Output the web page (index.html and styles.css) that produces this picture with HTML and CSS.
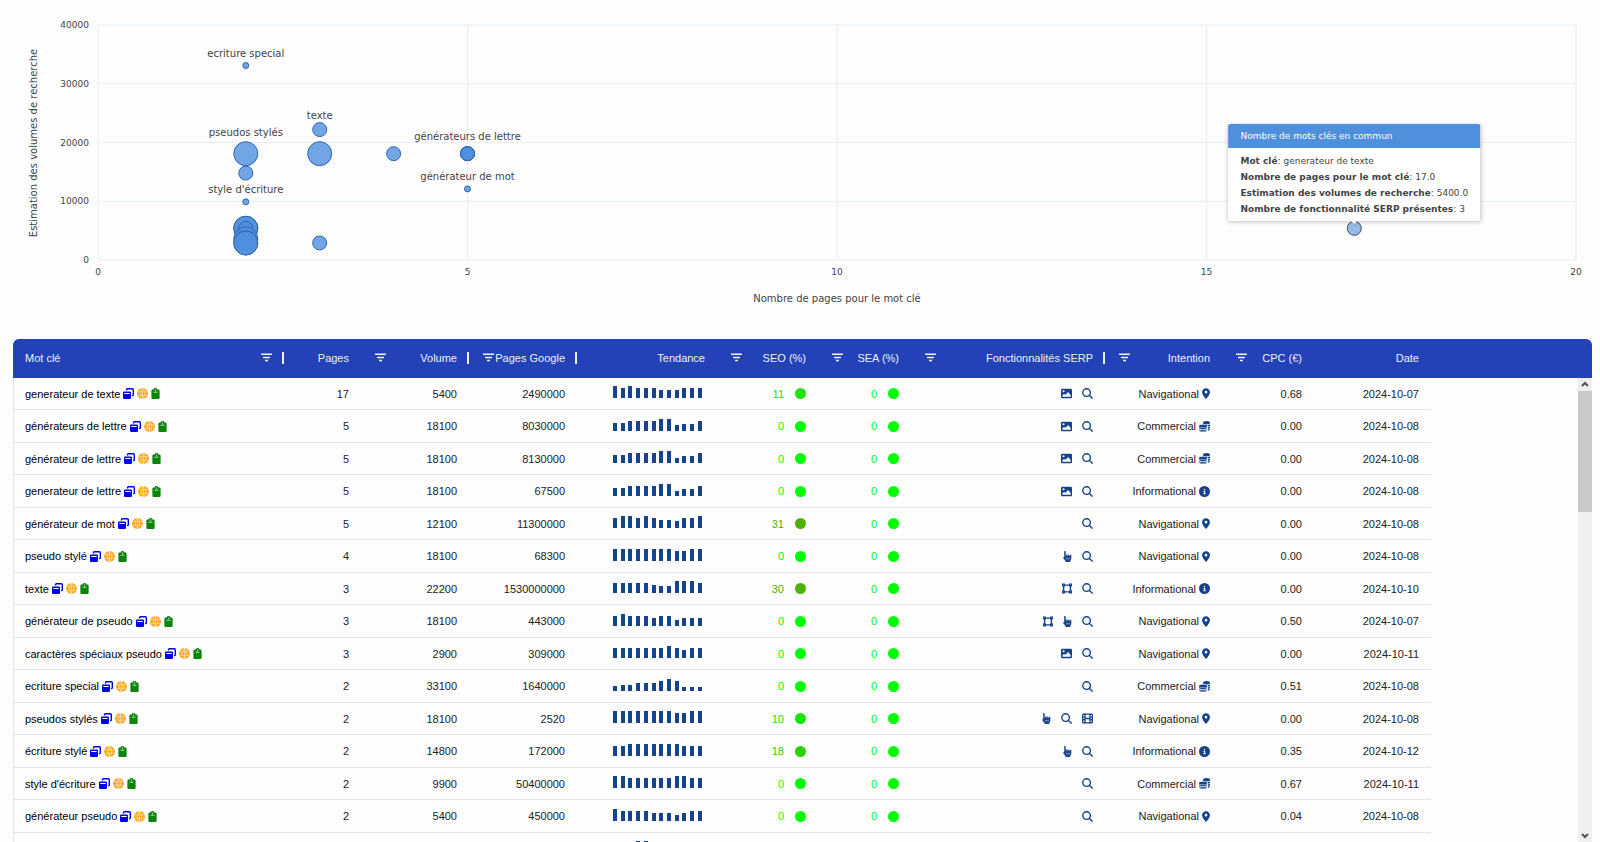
FILE: index.html
```html
<!DOCTYPE html>
<html lang="fr">
<head>
<meta charset="utf-8">
<title>Mots clés en commun</title>
<link rel="stylesheet" href="styles.css">
</head>
<body>
<svg class="sprite" aria-hidden="true">
  <symbol id="filter" viewBox="0 0 11 9"><path d="M0 1.200h11M2 4.400h7M4 7.600h3" stroke="currentColor" stroke-width="1.500" fill="none"/></symbol>
  <symbol id="windows" viewBox="0 0 11 11"><path d="M3.500 2.600V1.700q0-.9.900-.9h5q.9 0 .9.900v5q0 .9-.9.900H9" fill="none" stroke="currentColor" stroke-width="1.400"/><path fill-rule="evenodd" d="M1.200 3.400h5.600q1.200 0 1.200 1.200v5.200q0 1.200-1.200 1.200H1.200Q0 11 0 9.800V4.600q0-1.200 1.200-1.200zM1.300 5v1.100h5.400V5z"/></symbol>
  <symbol id="globe" viewBox="0 0 512 512"><circle cx="256" cy="256" r="252"/><path d="M256 0v512M20 176h472M20 336h472M256 6c-140 130-140 370 0 500M256 6c140 130 140 370 0 500" fill="none" stroke="#fff" stroke-width="22"/></symbol>
  <symbol id="clipboard" viewBox="0 0 384 512"><path fill-rule="evenodd" d="M192 0c-41.800 0-77.400 26.700-90.500 64H64C28.700 64 0 92.700 0 128v320c0 35.300 28.700 64 64 64h256c35.300 0 64-28.700 64-64V128c0-35.300-28.700-64-64-64h-37.500C269.400 26.700 233.800 0 192 0zm0 64a30 30 0 1 1 0 60 30 30 0 1 1 0-60zM104 180h176v30H104z"/></symbol>
  <symbol id="image" viewBox="0 0 512 448"><path fill-rule="evenodd" d="M64 0C29 0 0 29 0 64v320c0 35 29 64 64 64h384c35 0 64-29 64-64V64c0-35-29-64-64-64zM120 70a50 50 0 1 1 0 100 50 50 0 1 1 0-100zM64 376v-56l80-80 56 56 128-144 120 136v88z"/></symbol>
  <symbol id="search" viewBox="0 0 11 11"><path d="M8.400 4.600a3.800 3.800 0 1 1-7.600 0a3.800 3.800 0 0 1 7.600 0zM7.300 7.300l3.300 3.300" fill="none" stroke="currentColor" stroke-width="1.400"/></symbol>
  <symbol id="hand" viewBox="0 0 9 11"><path d="M1.200.7a.7.7 0 0 1 1.500 0v4h.6V3.800a.65.65 0 0 1 1.300 0v.9h.6V4.100a.65.65 0 0 1 1.300 0v.8h.5V4.500a.65.65 0 0 1 1.300 0v3.100c0 1.200-.5 1.700-1 2.200V11H2.500V9.900L.3 7.300c-.6-.8.2-1.500.9-1z"/><path d="M3.700 6.900v1.500M5 6.900v1.500M6.300 6.900v1.500" fill="none" stroke="#fff" stroke-width=".5"/></symbol>
  <symbol id="vector" viewBox="0 0 10 10"><path d="M1.600 1.600h6.800v6.800H1.600z" fill="none" stroke="currentColor" stroke-width="1.400"/><path d="M0 0h3v3H0zM7 0h3v3H7zM0 7h3v3H0zM7 7h3v3H7z"/><path d="M1.200 1.200h.6v.6h-.6zM8.200 1.200h.6v.6h-.6zM1.200 8.200h.6v.6h-.6zM8.200 8.200h.6v.6h-.6z" fill="#fff"/></symbol>
  <symbol id="film" viewBox="0 0 11 10"><rect width="11" height="10" rx="1.500"/><path d="M3.700 1.300h3.600v3H3.700zM3.700 5.700h3.600v3H3.700zM1.200 1.600h1.200v1.300H1.200zM1.200 4.300h1.200v1.300H1.200zM1.200 7.100h1.200v1.300H1.200zM8.600 1.600h1.200v1.300H8.600zM8.600 4.300h1.200v1.300H8.600zM8.600 7.100h1.200v1.300H8.600z" fill="#fff"/></symbol>
  <symbol id="pin" viewBox="0 0 384 512"><path fill-rule="evenodd" d="M215.700 499.200C267 435 384 279.400 384 192C384 86 298 0 192 0S0 86 0 192c0 87.400 117 243 168.300 307.200c12.300 15.300 35.100 15.300 47.400 0zM192 128a64 64 0 1 1 0 128 64 64 0 1 1 0-128z"/></symbol>
  <symbol id="coins" viewBox="0 0 11 11"><ellipse cx="7.500" cy="1.700" rx="3.500" ry="1.700"/><path d="M8.600 4.200c1-.2 1.900-.5 2.400-1v1.200c0 .5-.8 1-2.200 1.300zM8.900 6.400c.9-.2 1.600-.5 2.100-.9v1.200c0 .5-.8 1-2.100 1.300zM8.900 8.600c.9-.2 1.600-.5 2.100-.9v.9c0 .5-.8 1-2.100 1.300z"/><ellipse cx="4" cy="4.900" rx="4" ry="1.500"/><path d="M0 6c1.500 1.200 6.500 1.200 8 0v.8c0 1.700-8 1.700-8 0zM0 7.900c1.500 1.200 6.500 1.200 8 0v.7c0 1.700-8 1.700-8 0zM0 9.600c1.500 1.100 6.500 1.100 8 0C8 11.400 0 11.400 0 9.600z"/></symbol>
  <symbol id="info" viewBox="0 0 512 512"><path fill-rule="evenodd" d="M256 512A256 256 0 1 0 256 0a256 256 0 1 0 0 512zM216 336h24V272H216c-13.300 0-24-10.700-24-24s10.700-24 24-24h48c13.300 0 24 10.700 24 24v88h8c13.300 0 24 10.700 24 24s-10.700 24-24 24H216c-13.300 0-24-10.700-24-24s10.700-24 24-24zm40-208a32 32 0 1 1 0 64 32 32 0 1 1 0-64z"/></symbol>
</svg>

<main class="page">
  <section class="chart" aria-label="Mots clés en commun">
    <svg class="plot" id="plot"></svg>
    <div class="tooltip" role="tooltip">
      <h2 class="tooltip-title">Nombre de mots clés en commun</h2>
      <div class="tooltip-body">
        <p><b>Mot clé</b>: generateur de texte</p>
        <p><b>Nombre de pages pour le mot clé</b>: 17.0</p>
        <p><b>Estimation des volumes de recherche</b>: 5400.0</p>
        <p><b>Nombre de fonctionnalité SERP présentes</b>: 3</p>
      </div>
    </div>
  </section>

  <section class="grid">
    <table class="table">
      <colgroup>
        <col class="c-key"><col class="c-pages"><col class="c-volume"><col class="c-google"><col class="c-trend"><col class="c-seo"><col class="c-sea"><col class="c-serp"><col class="c-intent"><col class="c-cpc"><col class="c-date"><col>
      </colgroup>
      <thead><tr id="head"></tr></thead>
      <tbody id="rows"></tbody>
    </table>
    <div class="scrollbar" aria-hidden="true">
      <svg class="arrow" viewBox="0 0 14 13"><path d="M4 8l3-3 3 3"/></svg>
      <div class="thumb"></div>
      <svg class="arrow arrow-down" viewBox="0 0 14 13"><path d="M4 5l3 3 3-3"/></svg>
    </div>
  </section>
</main>
<script src="app.js"></script>
</body>
</html>
```
FILE: styles.css
```css
* { box-sizing: border-box; }

body {
  margin: 0;
  background: #fdfdfe;
  color: #222;
  font: 11px/16px "Liberation Sans", Arial, sans-serif;
}

.sprite { display: none; }

.page {
  display: flex;
  flex-direction: column;
  height: 100vh;
  overflow: hidden;
}

/* Bubble chart */
.chart {
  position: relative;
  flex: none;
  margin: 25px 24px 0 98px;
  font-family: "DejaVu Sans", Verdana, sans-serif;
}

.plot {
  display: block;
  width: 100%;
  height: 314px;
  overflow: visible;
}

.grid-line { stroke: #e8eef2; stroke-width: 1; }

.tick, .label, .axis-title { fill: #444; }
.tick { font-size: 9px; }
.label, .axis-title { font-size: 10px; }
.label, .tick-x, .axis-title { text-anchor: middle; }
.tick-y { text-anchor: end; }

.bubble { fill: #4f8fdc; fill-opacity: .8; stroke: #2c66b4; stroke-width: 1; }
.bubble-active { fill: #98b9e4; fill-opacity: 1; stroke: #34506f; }

.tooltip {
  position: absolute;
  left: 85%;
  top: 99px;
  transform: translateX(-50%);
  background: #fff;
  border-radius: 2px;
  box-shadow: 0 1px 4px rgba(0, 0, 0, .25);
  color: #444;
  font-size: 9px;
  white-space: nowrap;
}

.tooltip::after {
  content: "";
  position: absolute;
  top: 100%;
  left: 50%;
  margin-left: -3px;
  border: 3px solid transparent;
  border-top-color: #fff;
}

.tooltip-title {
  margin: 0;
  padding: 0 12px;
  border-radius: 2px 2px 0 0;
  background: #4f90dc;
  color: #fff;
  font-size: 9px;
  font-weight: normal;
  line-height: 24px;
}

.tooltip-body { padding: 5px 12px 4px; }
.tooltip-body p { margin: 0; }

/* Keyword table */
.grid {
  position: relative;
  flex: 1;
  min-height: 0;
  margin: 0 8px 0 13px;
  border-radius: 6px 6px 0 0;
  overflow: hidden;
}

.table {
  width: 100%;
  border-collapse: separate;
  border-spacing: 0;
  table-layout: fixed;
}

.c-key { width: 271px; }
.c-pages { width: 77px; }
.c-volume, .c-google { width: 108px; }
.c-trend { width: 140px; }
.c-seo { width: 101px; }
.c-sea { width: 93px; }
.c-serp { width: 194px; }
.c-intent { width: 117px; }
.c-cpc { width: 92px; }
.c-date { width: 117px; }

th {
  position: relative;
  height: 39px;
  padding: 0 12px 2px 14px;
  background: #2342b7;
  color: #eef1fb;
  font-weight: normal;
}

.head-cell {
  display: flex;
  align-items: center;
  justify-content: space-between;
  white-space: nowrap;
}

.head-end { justify-content: flex-end; }
.first .head-cell { flex-direction: row-reverse; }
.first { padding-left: 12px; }

.sep::after {
  content: "";
  position: absolute;
  top: 13px;
  right: 0;
  width: 2px;
  height: 12px;
  background: #eef1fb;
}

.filter {
  padding: 0;
  border: 0;
  background: none;
  color: inherit;
  line-height: 0;
}

.filter svg { width: 11px; height: 9px; }

td {
  height: 32px;
  padding: 0 12px;
  border-bottom: 1px solid #e4e6ec;
  text-align: right;
  white-space: nowrap;
}

tr:nth-child(even) td { height: 33px; }
td:last-child { border-bottom: 0; }
td:first-child { border-left: 1px solid #e4e6ee; padding-left: 11px; color: #000; text-align: left; }

.cell {
  display: flex;
  align-items: center;
  justify-content: flex-end;
  gap: 3px;
}

.cell-key { justify-content: flex-start; }
.cell-score { gap: 11px; }
.cell-serp { gap: 10px; }

.icon { flex: none; width: 11px; height: 11px; fill: currentColor; color: #154289; }
.icon-windows { color: #0000e6; }
.icon-globe { color: #f5a31c; }
.icon-clipboard { width: 9px; color: #0b840b; }
.icon-hand { width: 9px; }
.icon-vector { width: 10px; }
.icon-pin { width: 8px; }

.dot { width: 11px; height: 11px; border-radius: 50%; background: currentColor; }

.trend {
  display: flex;
  align-items: flex-end;
  justify-content: space-between;
  width: 89px;
  height: 12px;
  margin: 0 3px 3px auto;
}

.bar { width: 4px; background: #174488; }

.scrollbar {
  position: absolute;
  top: 39px;
  right: 0;
  bottom: 0;
  display: flex;
  flex-direction: column;
  width: 14px;
  background: #efeef1;
}

.arrow { width: 14px; height: 13px; fill: none; stroke: #505050; stroke-width: 2; }
.arrow-down { margin-top: auto; }
.thumb { height: 26%; background: #c9c9cb; }
```
FILE: app.js
```js
const PLOT_HEIGHT = 235;
const X_MAX = 20;
const Y_MAX = 40000;
const px = x => (x / X_MAX * 100) + '%';
const py = y => PLOT_HEIGHT - y / Y_MAX * PLOT_HEIGHT;

let chart = '';
[0, 10000, 20000, 30000, 40000].forEach(v => {
  chart += `<line class="grid-line" x1="0" x2="100%" y1="${py(v)}" y2="${py(v)}"/>`;
  chart += `<text class="tick tick-y" x="-9" y="${py(v) + 3}">${v}</text>`;
});
[0, 5, 10, 15, 20].forEach(v => {
  chart += `<line class="grid-line" x1="${px(v)}" x2="${px(v)}" y1="0" y2="${PLOT_HEIGHT}"/>`;
  chart += `<text class="tick tick-x" x="${px(v)}" y="250">${v}</text>`;
});
chart += '<text class="axis-title" x="50%" y="277">Nombre de pages pour le mot clé</text>';
chart += '<text class="axis-title" transform="translate(-61 118) rotate(-90)">Estimation des volumes de recherche</text>';

// pages, volume, radius
[
  [2, 33100, 3], [3, 22200, 7], [2, 18100, 12], [3, 18100, 12], [4, 18100, 7],
  [5, 18100, 7], [5, 18100, 7], [5, 18100, 7], [2, 14800, 7], [5, 12100, 3],
  [2, 9900, 3], [2, 5400, 12], [2, 5400, 12], [2, 5400, 7], [2, 3600, 12],
  [2, 2900, 12], [2, 2900, 12], [3, 2900, 7]
].forEach(([x, y, r]) => {
  chart += `<circle class="bubble" cx="${px(x)}" cy="${py(y)}" r="${r}"/>`;
});
chart += `<circle class="bubble bubble-active" cx="85%" cy="${py(5400)}" r="7"/>`;

[
  [2, 32, 'ecriture special'], [3, 94, 'texte'], [2, 111, 'pseudos stylés'],
  [5, 115, 'générateurs de lettre'], [5, 155, 'générateur de mot'], [2, 168, "style d'écriture"]
].forEach(([x, y, t]) => {
  chart += `<text class="label" x="${px(x)}" y="${y}">${t}</text>`;
});
document.getElementById('plot').innerHTML = chart;

// label, has filter, has separator
document.getElementById('head').innerHTML = [
  ['Mot clé', 1, 1], ['Pages', 0, 0], ['Volume', 1, 1], ['Pages Google', 1, 1],
  ['Tendance', 0, 0], ['SEO (%)', 1, 0], ['SEA (%)', 1, 0], ['Fonctionnalités SERP', 1, 1],
  ['Intention', 1, 0], ['CPC (€)', 1, 0], ['Date', 0, 0]
].map(([label, filter, sep], i) =>
  `<th scope="col" class="${i ? '' : 'first'} ${sep ? 'sep' : ''}"><div class="head-cell ${filter ? '' : 'head-end'}">` +
  (filter ? `<button class="filter" type="button" aria-label="Filtrer ${label}"><svg><use href="#filter"/></svg></button>` : '') +
  `<span>${label}</span></div></th>`).join('') + '<th></th>';

const icon = name => `<svg class="icon icon-${name}" aria-hidden="true"><use href="#${name}"/></svg>`;
const score = n => {
  const red = Math.round(n * 2.55);
  return `<div class="cell cell-score" style="color:rgb(${red},${255 - red},0)"><span>${n}</span><span class="dot"></span></div>`;
};
const bars = heights => `<div class="trend">${heights.map(h => `<span class="bar" style="height:${h}px"></span>`).join('')}</div>`;
const intents = { Navigational: 'pin', Commercial: 'coins', Informational: 'info' };
const N = 'Navigational', C = 'Commercial', I = 'Informational';

document.getElementById('rows').innerHTML = [
  ['generateur de texte', 17, 5400, 2490000, [12,10,12,10,10,10,8,8,8,10,10,10], 11, 'image search', N, '0.68', '2024-10-07'],
  ['générateurs de lettre', 5, 18100, 8030000, [8,8,10,10,10,10,12,12,6,7,7,10], 0, 'image search', C, '0.00', '2024-10-08'],
  ['générateur de lettre', 5, 18100, 8130000, [8,8,10,10,10,10,12,12,5,7,7,10], 0, 'image search', C, '0.00', '2024-10-08'],
  ['generateur de lettre', 5, 18100, 67500, [8,8,10,10,10,10,12,12,5,7,7,10], 0, 'image search', I, '0.00', '2024-10-08'],
  ['générateur de mot', 5, 12100, 11300000, [10,12,12,10,12,10,8,8,7,10,10,12], 31, 'search', N, '0.00', '2024-10-08'],
  ['pseudo stylé', 4, 18100, 68300, [12,12,12,12,12,12,12,12,10,10,12,12], 0, 'hand search', N, '0.00', '2024-10-08'],
  ['texte', 3, 22200, 1530000000, [10,10,10,10,10,8,7,7,12,12,12,10], 30, 'vector search', I, '0.00', '2024-10-10'],
  ['générateur de pseudo', 3, 18100, 443000, [10,12,10,10,10,8,10,10,6,8,8,8], 0, 'vector hand search', N, '0.50', '2024-10-07'],
  ['caractères spéciaux pseudo', 3, 2900, 309000, [10,10,10,10,10,10,10,12,10,8,10,10], 0, 'image search', N, '0.00', '2024-10-11'],
  ['ecriture special', 2, 33100, 1640000, [5,6,6,8,8,8,10,12,10,4,4,4], 0, 'search', C, '0.51', '2024-10-08'],
  ['pseudos stylés', 2, 18100, 2520, [12,12,12,12,12,12,12,12,10,10,12,12], 10, 'hand search film', N, '0.00', '2024-10-08'],
  ['écriture stylé', 2, 14800, 172000, [10,10,12,12,12,12,12,12,12,10,10,10], 18, 'hand search', I, '0.35', '2024-10-12'],
  ["style d'écriture", 2, 9900, 50400000, [12,12,10,10,10,10,10,10,12,12,10,10], 0, 'search', C, '0.67', '2024-10-11'],
  ['générateur pseudo', 2, 5400, 450000, [12,10,10,10,10,8,8,8,6,8,10,10], 0, 'search', N, '0.04', '2024-10-08']
].map(([key, pages, volume, google, trend, seo, serp, intent, cpc, date]) => `<tr>
  <td><div class="cell cell-key"><span>${key}</span>${icon('windows')}${icon('globe')}${icon('clipboard')}</div></td>
  <td>${pages}</td><td>${volume}</td><td>${google}</td>
  <td>${bars(trend)}</td>
  <td>${score(seo)}</td><td>${score(0)}</td>
  <td><div class="cell cell-serp">${serp.split(' ').map(icon).join('')}</div></td>
  <td><div class="cell"><span>${intent}</span>${icon(intents[intent])}</div></td>
  <td>${cpc}</td><td>${date}</td><td></td></tr>`).join('') +
  `<tr><td></td><td></td><td></td><td></td><td>${bars([10,10,10,12,12,10,10,10,10,10,10,10])}</td><td colspan="6"></td><td></td></tr>`;
```
